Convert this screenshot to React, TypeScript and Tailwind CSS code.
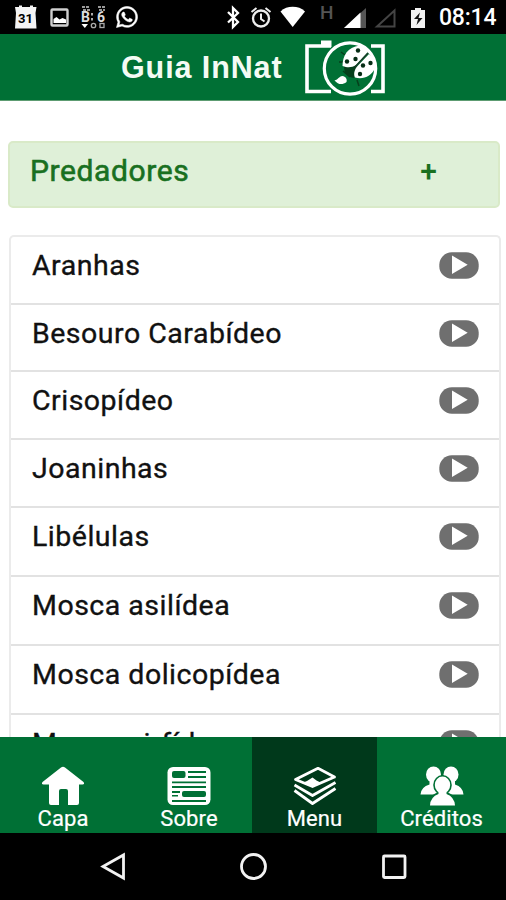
import React from 'react';
import { FaWhatsapp } from 'react-icons/fa';

const predators = [
  { name: 'Aranhas', height: 'h-[68px]' },
  { name: 'Besouro Carabídeo', height: 'h-[67px]' },
  { name: 'Crisopídeo', height: 'h-[68px]' },
  { name: 'Joaninhas', height: 'h-[68px]' },
  { name: 'Libélulas', height: 'h-[69px]' },
  { name: 'Mosca asilídea', height: 'h-[69px]' },
  { name: 'Mosca dolicopídea', height: 'h-[69px]' },
  { name: 'Mosca sirfídea', height: 'h-[69px]' },
];

function StatusBar() {
  return (
    <div className="relative h-[34px] shrink-0 bg-black">
      <svg className="block" width="506" height="34" viewBox="0 0 506 34" fill="none">
        {/* calendar */}
        <path d="M15 7h4V5.500h3V7h8V5.500h3V7h3.500l-1 6 1 15.500H15l1-15.500z" fill="#f4f4f4" />
        {/* picture */}
        <rect x="51.500" y="9.500" width="16" height="16" rx="1" stroke="#d0d0d0" strokeWidth="2.400" />
        <path d="M53.500 23v-4l3-2 3 2.500 3-1.500 3.500 1.500V23z" fill="#fff" />
        {/* small weather glyphs */}
        <path d="M82 7h8M83 10h7M98 7h7M99 10h6" stroke="#999" strokeWidth="2" strokeDasharray="3 1" />
        <path d="M92 13v2.500M92 18v2.500" stroke="#aaa" strokeWidth="2" />
        <path d="M81.500 24h6.500l-3.200 4z" fill="#fff" />
        <circle cx="93.500" cy="25.500" r="2.200" stroke="#aaa" strokeWidth="1.300" />
        <rect x="100" y="23.500" width="4" height="4" stroke="#aaa" strokeWidth="1.300" />
        {/* bluetooth */}
        <path d="m228 12 10 10-5 5V8l5 5-10 9.500" stroke="#fff" strokeWidth="2.300" />
        {/* alarm */}
        <circle cx="261" cy="18.500" r="8" stroke="#eee" strokeWidth="2.300" />
        <path d="M261 13.500v5.500l3.500 2.500M251.500 12l5-4M270.500 12l-5-4" stroke="#eee" strokeWidth="2" />
        {/* wifi */}
        <path d="M280.500 11.500C284 8 288 6.800 292.700 6.800S301.500 8 305 11.500L292.700 27z" fill="#fff" />
        {/* signal bars */}
        <path d="M366 8v20h-22z" fill="#555" />
        <path d="M360.500 12.500V28H344z" fill="#fff" />
        <path d="M394.500 10.500v16h-17.500z" stroke="#444" strokeWidth="2" />
        {/* battery */}
        <path d="M411 10h4V8h6v2h4v18h-14z" fill="#f2f2f2" />
        <path d="M420 12.500 414 19h4l-1.500 6 6-7h-4z" fill="#111" />
      </svg>
      <span className="absolute top-[12px] left-[18px] font-['Roboto',sans-serif] text-[13px] leading-[14px] font-bold text-black">31</span>
      <span className="absolute top-[10px] left-[81px] font-['Roboto',sans-serif] text-[14px] leading-[14px] font-bold text-[#ddd]">B</span>
      <span className="absolute top-[10px] left-[97px] font-['Roboto',sans-serif] text-[14px] leading-[14px] font-bold text-[#ddd]">6</span>
      <FaWhatsapp className="absolute top-[5px] left-[115px] size-6 stroke-white stroke-[12px] text-white" />
      <span className="absolute top-[4px] left-[320px] font-['Roboto',sans-serif] text-[19px] leading-[18px] font-medium text-[#555]">H</span>
      <span className="absolute top-[5px] left-[439px] font-['Roboto',sans-serif] text-[23px] leading-[26px] font-medium tracking-[-0.2px] text-white">08:14</span>
    </div>
  );
}

function LadybugCamera() {
  return (
    <svg width="82" height="58" viewBox="304 38 82 58" fill="none">
      <path d="M331 91.500h-24V46h24M371 46h12v45.500h-12" stroke="#fff" strokeWidth="3.600" />
      <path d="M321 40.500h10.500V47H321z" fill="#fff" />
      <path d="m341 52 4 3M339 62h5M357 80l2 6M343 71l7 6" stroke="#063f1c" strokeWidth="1.500" />
      <path d="M344 66c2-3 9-4 14 0l-4 12c-7-1-10-5-10-12z" fill="#063f1c" />
      <path d="M342.500 66c0-10 5-19 17-20.500 4 0 7 3 8.500 6.500L356 65c-4 2.500-8 3-13.500 1z" fill="#fff" />
      <path d="M355 77.500c-2-4 0-9 3-12L369 54c5 4 7 9 6 14-3 8-12 12-20 9.500z" fill="#fff" />
      <path d="M355 67 368 53" stroke="#183d27" strokeWidth="1.500" />
      <g fill="#062d15">
        <circle cx="358" cy="50.500" r="2.200" />
        <circle cx="355.500" cy="59" r="2.200" />
        <circle cx="347" cy="61.500" r="2.200" />
        <circle cx="370.500" cy="63" r="2.200" />
        <circle cx="363" cy="65.500" r="2.200" />
        <circle cx="360" cy="74" r="2.200" />
      </g>
      <path d="M334.500 80.500c4-1 4-4 8-4.500 3 .5 5 3 4 6-4 3-8 3-12-1.500z" fill="#fff" />
      <circle cx="350" cy="68.500" r="25.700" stroke="#fff" strokeWidth="3.200" />
    </svg>
  );
}

function Header() {
  return (
    <header className="flex h-[67px] shrink-0 items-center border-b border-[#5d9c72] bg-[#007035] pl-[120px]">
      <h1 className="w-[184px] pl-px font-['Liberation_Sans',sans-serif] text-[30.5px] leading-none font-bold tracking-[0.9px] whitespace-nowrap text-[#f4fbf4]">Guia InNat</h1>
      <LadybugCamera />
    </header>
  );
}

function PlayPill() {
  return (
    <svg className="mt-[15px] shrink-0" width="40" height="27" viewBox="0 0 40 27">
      <rect x=".3" y=".3" width="39.400" height="26.400" rx="12.500" fill="#6f6f6f" />
      <path d="M13 3.500V22L28.700 12.700z" fill="#fff" />
    </svg>
  );
}

function PredatorList() {
  return (
    <ul className="mt-[27px] mr-[5px] ml-[9px] rounded-t-[5px] border-2 border-b-0 border-[#ebebeb]">
      {predators.map((item) => (
        <li key={item.name} className={`flex justify-between border-b-2 border-[#e2e2e2] pr-[20px] pl-[21px] ${item.height}`}>
          <span className="pt-[11px] font-['Roboto',sans-serif] text-[28.5px] leading-[36px] tracking-[0.5px] text-[#111] [-webkit-text-stroke:0.35px_#111]">{item.name}</span>
          <PlayPill />
        </li>
      ))}
    </ul>
  );
}

function HomeIcon() {
  return (
    <svg width="44" height="40" viewBox="0 0 44 40" fill="#fff">
      <path d="M20 1.500q2-1.500 4 0L42.500 16q1.500 2-1 2.500H38V37q0 2-2 2h-9V25q0-2-2-2h-5q-2 0-2 2v14h-8q-2 0-2-2V18.500H2.500Q0 18 1.500 16z" />
    </svg>
  );
}

function NewsIcon() {
  return (
    <svg width="44" height="40" viewBox="0 0 44 40">
      <rect x=".5" y="1" width="43" height="38" rx="5.500" fill="#fff" />
      <g fill="#007035">
        <rect x="5" y="5" width="13.500" height="7" rx="2" />
        <path d="M21 5h18v2H21zM21 10h18v2H21zM5 15.500h34v1.800H5zM5 20h34v2H5zM5 25h8v2H5zM5 29h6v1.500H5zM5 34h34v2H5z" />
        <rect x="15" y="25" width="24" height="6" rx="2" />
      </g>
    </svg>
  );
}

function LayersIcon() {
  return (
    <svg width="44" height="40" viewBox="0 0 44 40" fill="none" stroke="#fff" strokeWidth="2.800" strokeLinejoin="round">
      <path d="M2.500 13.500 25 2.300 41.500 11 19.500 20.500z" />
      <path d="M1.500 19 19.500 29.500 42.500 16.500M1.500 24.500 19.500 37.500 42.500 22.500" />
      <path d="m9 17 5-2 5.500-3.500 4 3 5 2.500-9 4z" fill="#fff" stroke="none" />
    </svg>
  );
}

function PeopleIcon() {
  return (
    <svg width="44" height="40" viewBox="0 0 44 40" fill="#fff">
      <ellipse cx="13.500" cy="8.500" rx="7.500" ry="8" />
      <ellipse cx="31" cy="8.500" rx="7.500" ry="8" />
      <path d="M.5 28.500Q1 21 9.500 18.500V12h8.500v16.500zM43.500 28.500Q43 21 35 18.500V12h-8.500v16.500z" />
      {/* green halo first, so the front figure stays solid */}
      <g fill="#007035">
        <ellipse cx="22.500" cy="19" rx="9.300" ry="10" />
        <path d="M8.500 39.500q0-9.500 8.500-13h11q9 3.500 9 13z" />
      </g>
      <ellipse cx="22.500" cy="19" rx="7.700" ry="8.500" />
      <path d="M10 39.500q.3-8.500 8.500-11.500v-5h8v5q8 3 8.500 11.500z" />
    </svg>
  );
}

const tabs = [
  { label: 'Capa', Icon: HomeIcon, background: 'bg-[#007035]' },
  { label: 'Sobre', Icon: NewsIcon, background: 'bg-[#007035]' },
  { label: 'Menu', Icon: LayersIcon, background: 'bg-[#00391b]' },
  { label: 'Créditos', Icon: PeopleIcon, background: 'bg-[#007035]' },
];

function TabBar() {
  return (
    <nav className="grid h-[96px] shrink-0 grid-cols-[126px_126px_125px_129px]">
      {tabs.map(({ label, Icon, background }) => (
        <a key={label} className={`flex flex-col items-center pt-[29px] ${background}`}>
          <Icon />
          <span className="font-['Roboto',sans-serif] text-[22px] leading-[26px] tracking-[0.1px] text-white [-webkit-text-stroke:0.2px_#fff]">{label}</span>
        </a>
      ))}
    </nav>
  );
}

export default function App() {
  return (
    <div className="flex h-[900px] w-[506px] flex-col overflow-hidden bg-white">
      <StatusBar />
      <Header />
      <main className="min-h-0 flex-1 overflow-hidden pt-[40px]">
        <div className="mr-[6px] ml-[8px] flex h-[67px] justify-between rounded-[5px] border-2 border-[#d9eac8] bg-[#dff0d8] pr-[61px] pl-[20px] font-['Roboto',sans-serif] text-[#19701f]">
          <span className="pt-[10px] text-[30px] leading-[36px] tracking-[0.6px] [-webkit-text-stroke:0.6px_#19701f]">Predadores</span>
          <span className="pt-[10px] text-[30px] leading-[36px] font-medium">+</span>
        </div>
        <PredatorList />
      </main>
      <TabBar />
      <footer className="h-[67px] shrink-0 bg-black">
        <svg width="506" height="67" viewBox="0 833 506 67" fill="none" stroke="#f2f2f2" strokeWidth="2.800">
          <path d="M123.500 855v23l-20.500-11.500z" />
          <circle cx="253.500" cy="866.500" r="12" />
          <rect x="383.500" y="856" width="21.500" height="21.500" rx="1" />
        </svg>
      </footer>
    </div>
  );
}
